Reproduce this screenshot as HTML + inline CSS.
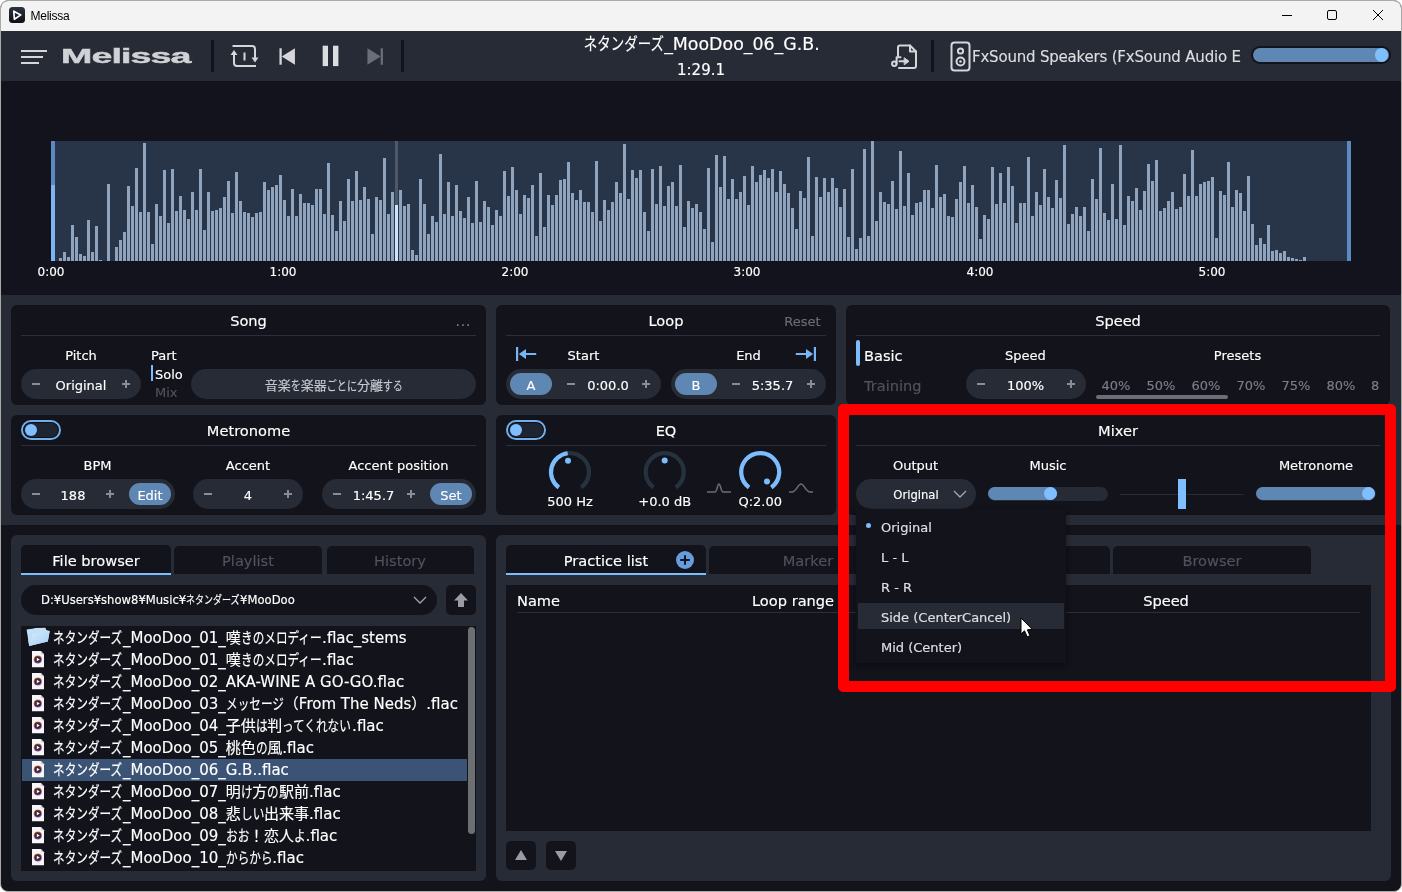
<!DOCTYPE html>
<html lang="ja"><head><meta charset="utf-8"><title>Melissa</title>
<style>
*{box-sizing:border-box;margin:0;padding:0}
html,body{width:1402px;height:892px;overflow:hidden;background:#fff}
body{position:relative;font-family:"DejaVu Sans","Liberation Sans","Noto Sans CJK JP",sans-serif;color:#fff;font-size:13px;-webkit-text-stroke:0.150px currentColor}
.a{position:absolute}
.win{will-change:transform;position:absolute;left:0;top:0;width:1402px;height:892px;border-radius:8px;overflow:hidden;background:#12131b;border:1px solid #a9a9a6}
.tb{left:0;top:0;width:1400px;height:30px;background:#f3f3f3;color:#000}
.hd{left:0;top:30px;width:1400px;height:50px;background:#272b36}
.wv{left:0;top:80px;width:1400px;height:214px;background:#12131c}
.mid{left:0;top:294px;width:1400px;height:230px;background:#272b36}
.pn{position:absolute;background:#12131b;border-radius:6px}
.pn2{position:absolute;background:#272b36;border-radius:6px}
.t{position:absolute;white-space:nowrap;transform:translate(-50%,-50%);line-height:1}
.tl{position:absolute;white-space:nowrap;transform:translate(0,-50%);line-height:1}
.ttl{font-size:14.600px}
.lb{font-size:13px}
.dv{position:absolute;height:1px;background:#2b2f3a}
.st{position:absolute;height:30px;border-radius:15px;background:#272b36}
.pm{color:#7c7f89;font-size:15px}
.btn{position:absolute;height:22px;border-radius:11px;background:#5f87b4}
.tg{position:absolute;width:40px;height:20px;border-radius:10px;border:2px solid #71aeec;background:#0e0f16}
.tg b{position:absolute;left:1px;top:1px;width:34px;height:14px;border-radius:7px;background:#1f2431}
.tg i{position:absolute;left:2px;top:2px;width:12px;height:12px;border-radius:6px;background:#80bfff}
.dim{color:#50535e}
.gr{color:#7c7f89}
.k{display:inline-block;transform-origin:0 50%;white-space:nowrap}
.row{position:absolute;left:22px;width:445px;height:22px}
.row .tl{left:31px;top:11px;font-size:15px}
svg{position:absolute;overflow:visible}
.kw{display:inline-block;vertical-align:baseline;white-space:nowrap;overflow:visible}
</style></head>
<body>
<div class="win">

<div class="a tb">
 <svg style="left:8px;top:6px" width="17" height="17" viewBox="0 0 17 17"><defs><linearGradient id="ig" x1="0" y1="0" x2="0" y2="1"><stop offset="0" stop-color="#2c3442"/><stop offset="1" stop-color="#0d0f16"/></linearGradient></defs><rect x="0" y="0" width="16" height="16" rx="3.500" fill="url(#ig)"/><path d="M4.800 4.200 L11.800 7.900 L5.400 12.200 Z" fill="none" stroke="#fff" stroke-width="1.700" stroke-linejoin="round"/></svg>
 <div class="tl" style="left:29.500px;top:14.500px;font-size:12px;letter-spacing:-0.250px;-webkit-text-stroke:0;font-family:'Liberation Sans',sans-serif;color:#000">Melissa</div>
 <svg style="left:1281px;top:9px" width="12" height="12"><path d="M0 5.500H10" stroke="#000" stroke-width="1"/></svg>
 <svg style="left:1326px;top:9px" width="12" height="12"><rect x="0.500" y="0.500" width="9" height="9" rx="1.500" fill="none" stroke="#000" stroke-width="1"/></svg>
 <svg style="left:1372px;top:9px" width="12" height="12"><path d="M0 0L10 10M10 0L0 10" stroke="#000" stroke-width="1"/></svg>
</div>


<div class="a hd">
 <div class="a" style="left:20px;top:19px;width:26px;height:2px;background:#d4d6da"></div>
 <div class="a" style="left:20px;top:25px;width:22px;height:2px;background:#d4d6da"></div>
 <div class="a" style="left:20px;top:31px;width:18px;height:2px;background:#d4d6da"></div>
 <div class="tl" id="logo" style="left:59.500px;top:24.400px;font-size:21px;font-weight:bold;font-family:'Liberation Sans',sans-serif;color:#d0d2d6;transform-origin:0 50%;transform:translate(0,-50%) scaleX(1.790);letter-spacing:-0.500px;-webkit-text-stroke:0.450px #d0d2d6">Melissa</div>
 <div class="a" style="left:210px;top:9px;width:3px;height:32px;background:#12131b"></div>
 <div class="a" style="left:400px;top:9px;width:3px;height:32px;background:#12131b"></div>
 <div class="a" style="left:930px;top:9px;width:3px;height:32px;background:#12131b"></div>
 <!-- loop icon -->
 <svg style="left:228.900px;top:13px" width="30" height="24" viewBox="0 0 30 24" fill="none" stroke="#d4d6da" stroke-width="2">
  <path d="M4 10 V19 a3 3 0 0 0 3 3 H26"/><path d="M2.500 2 H22 a3 3 0 0 1 3 3 V14"/>
  <path d="M0.500 11 L4 6 L7.500 11 Z" fill="#d4d6da" stroke="none"/><path d="M21.500 13.500 L25 18.500 L28.500 13.500 Z" fill="#d4d6da" stroke="none"/>
  <path d="M14.500 8.500 V16.500"/>
 </svg>
 <!-- prev -->
 <svg style="left:278px;top:17px" width="16.400" height="17" viewBox="0 0 18 18" preserveAspectRatio="none"><rect x="0.500" y="0.300" width="2.500" height="17.400" fill="#d4d6da"/><path d="M3 9 L17.500 0.300 V17.700 Z" fill="#d4d6da"/></svg>
 <!-- pause -->
 <svg style="left:321px;top:14px" width="20" height="24" viewBox="0 0 20 24" fill="#dcdde0"><rect x="0.700" y="0.700" width="5.300" height="20.400"/><rect x="11" y="0.700" width="5.400" height="20.400"/></svg>
 <!-- next -->
 <svg style="left:365.700px;top:17px" width="16.400" height="17" viewBox="0 0 18 18" preserveAspectRatio="none"><rect x="15" y="0.300" width="2.500" height="17.400" fill="#6b6e78"/><path d="M15 9 L0.500 0.300 V17.700 Z" fill="#6b6e78"/></svg>
 <div class="t" id="title" style="left:700.500px;top:14px;font-size:17.400px"><span class="kw" style="width:80.900px"><span class="k" style="transform:scaleX(0.775)">ネタンダーズ</span></span>_MooDoo_06_G.B.</div>
 <div class="t" style="left:700px;top:39px;font-size:15px">1:29.1</div>
 <!-- file export icon -->
 <svg style="left:889px;top:11.500px" width="28" height="28" viewBox="0 0 28 28" fill="none" stroke="#d4d6da" stroke-width="2" stroke-linejoin="round" stroke-linecap="round">
  <path d="M8 13 V4.500 a2 2 0 0 1 2 -2 H20 L26 8.500 V23 a2 2 0 0 1 -2 2 H9"/><path d="M20 2.500 V8.500 H26"/>
  <circle cx="4.300" cy="20.800" r="2.200"/><path d="M6.600 20.800 V14.300 H10.500"/><path d="M9.500 18.300 H15"/><path d="M14.500 15 L19 18.300 L14.500 21.600 Z" fill="#d4d6da" stroke-width="1"/>
 </svg>
 <!-- speaker -->
 <svg style="left:949.200px;top:9.600px" width="22" height="32" viewBox="0 0 22 32" fill="none" stroke="#d4d6da" stroke-width="2">
  <rect x="1.500" y="1.500" width="18" height="28" rx="3"/><circle cx="10.500" cy="10" r="2.600"/><circle cx="10.500" cy="20.500" r="4"/><circle cx="10.500" cy="20.500" r="1.300" fill="#d4d6da" stroke="none"/>
 </svg>
 <div class="tl" id="dev" style="left:971px;top:26px;font-size:15px;letter-spacing:-0.200px;color:#dcdde0">FxSound Speakers (FxSound Audio E</div>
 <div class="a" style="left:1249.500px;top:15px;width:140px;height:18px;border-radius:9px;background:#12131b"></div>
 <div class="a" style="left:1251.500px;top:17.400px;width:136px;height:13.600px;border-radius:7px;background:#5f87b4"></div>
 <div class="a" style="left:1373.800px;top:17.400px;width:13.600px;height:13.600px;border-radius:7px;background:#80bfff"></div>
</div>


<div class="a wv">
 <div class="a" style="left:50px;top:60px;width:1300px;height:120px;background:#283548"></div>
 <svg style="left:-1px;top:-81px" width="1402" height="300" viewBox="0 0 1402 300" fill="#8fa3bd" shape-rendering="crispEdges">
  <rect x="395" y="141" width="3" height="70" fill="#4d5869"/>
  <rect x="59" y="258" width="3" height="3"/>
<rect x="63" y="252" width="3" height="9"/>
<rect x="67" y="257" width="3" height="4"/>
<rect x="71" y="225" width="3" height="36"/>
<rect x="75" y="237" width="3" height="24"/>
<rect x="79" y="254" width="3" height="7"/>
<rect x="83" y="256" width="3" height="5"/>
<rect x="87" y="220" width="3" height="41"/>
<rect x="91" y="252" width="3" height="9"/>
<rect x="95" y="226" width="3" height="35"/>
<rect x="99" y="260" width="3" height="1"/>
<rect x="107" y="184" width="3" height="77"/>
<rect x="115" y="247" width="3" height="14"/>
<rect x="119" y="240" width="3" height="21"/>
<rect x="123" y="232" width="3" height="29"/>
<rect x="127" y="186" width="3" height="75"/>
<rect x="131" y="206" width="3" height="55"/>
<rect x="135" y="168" width="3" height="93"/>
<rect x="139" y="212" width="3" height="49"/>
<rect x="143" y="143" width="3" height="118"/>
<rect x="147" y="212" width="3" height="49"/>
<rect x="151" y="244" width="3" height="17"/>
<rect x="155" y="204" width="3" height="57"/>
<rect x="159" y="216" width="3" height="45"/>
<rect x="163" y="170" width="3" height="91"/>
<rect x="167" y="223" width="3" height="38"/>
<rect x="171" y="169" width="3" height="92"/>
<rect x="175" y="211" width="3" height="50"/>
<rect x="179" y="196" width="3" height="65"/>
<rect x="183" y="210" width="3" height="51"/>
<rect x="187" y="219" width="3" height="42"/>
<rect x="191" y="192" width="3" height="69"/>
<rect x="195" y="210" width="3" height="51"/>
<rect x="199" y="169" width="3" height="92"/>
<rect x="203" y="230" width="3" height="31"/>
<rect x="207" y="192" width="3" height="69"/>
<rect x="211" y="211" width="3" height="50"/>
<rect x="215" y="210" width="3" height="51"/>
<rect x="219" y="208" width="3" height="53"/>
<rect x="223" y="197" width="3" height="64"/>
<rect x="227" y="181" width="3" height="80"/>
<rect x="231" y="213" width="3" height="48"/>
<rect x="235" y="172" width="3" height="89"/>
<rect x="239" y="201" width="3" height="60"/>
<rect x="243" y="212" width="3" height="49"/>
<rect x="247" y="213" width="3" height="48"/>
<rect x="251" y="217" width="3" height="44"/>
<rect x="255" y="213" width="3" height="48"/>
<rect x="259" y="212" width="3" height="49"/>
<rect x="263" y="182" width="3" height="79"/>
<rect x="267" y="190" width="3" height="71"/>
<rect x="271" y="187" width="3" height="74"/>
<rect x="275" y="185" width="3" height="76"/>
<rect x="279" y="175" width="3" height="86"/>
<rect x="283" y="200" width="3" height="61"/>
<rect x="287" y="216" width="3" height="45"/>
<rect x="291" y="189" width="3" height="72"/>
<rect x="295" y="216" width="3" height="45"/>
<rect x="299" y="194" width="3" height="67"/>
<rect x="303" y="203" width="3" height="58"/>
<rect x="307" y="203" width="3" height="58"/>
<rect x="311" y="205" width="3" height="56"/>
<rect x="315" y="189" width="3" height="72"/>
<rect x="319" y="189" width="3" height="72"/>
<rect x="323" y="214" width="3" height="47"/>
<rect x="327" y="163" width="3" height="98"/>
<rect x="331" y="215" width="3" height="46"/>
<rect x="335" y="231" width="3" height="30"/>
<rect x="339" y="201" width="3" height="60"/>
<rect x="343" y="221" width="3" height="40"/>
<rect x="347" y="179" width="3" height="82"/>
<rect x="351" y="201" width="3" height="60"/>
<rect x="355" y="171" width="3" height="90"/>
<rect x="359" y="200" width="3" height="61"/>
<rect x="363" y="187" width="3" height="74"/>
<rect x="367" y="199" width="3" height="62"/>
<rect x="371" y="234" width="3" height="27"/>
<rect x="375" y="197" width="3" height="64"/>
<rect x="379" y="200" width="3" height="61"/>
<rect x="383" y="158" width="3" height="103"/>
<rect x="387" y="214" width="3" height="47"/>
<rect x="391" y="192" width="3" height="69"/>
<rect x="395" y="205" width="3" height="56" fill="#cde4ff"/>
<rect x="399" y="190" width="3" height="71"/>
<rect x="403" y="206" width="3" height="55"/>
<rect x="407" y="204" width="3" height="57"/>
<rect x="411" y="250" width="3" height="11"/>
<rect x="415" y="255" width="3" height="6"/>
<rect x="419" y="179" width="3" height="82"/>
<rect x="423" y="204" width="3" height="57"/>
<rect x="427" y="234" width="3" height="27"/>
<rect x="431" y="216" width="3" height="45"/>
<rect x="435" y="222" width="3" height="39"/>
<rect x="439" y="154" width="3" height="107"/>
<rect x="443" y="214" width="3" height="47"/>
<rect x="447" y="182" width="3" height="79"/>
<rect x="451" y="216" width="3" height="45"/>
<rect x="455" y="185" width="3" height="76"/>
<rect x="459" y="211" width="3" height="50"/>
<rect x="463" y="218" width="3" height="43"/>
<rect x="467" y="197" width="3" height="64"/>
<rect x="471" y="223" width="3" height="38"/>
<rect x="475" y="181" width="3" height="80"/>
<rect x="479" y="222" width="3" height="39"/>
<rect x="483" y="201" width="3" height="60"/>
<rect x="487" y="207" width="3" height="54"/>
<rect x="491" y="225" width="3" height="36"/>
<rect x="495" y="210" width="3" height="51"/>
<rect x="499" y="216" width="3" height="45"/>
<rect x="503" y="171" width="3" height="90"/>
<rect x="507" y="196" width="3" height="65"/>
<rect x="511" y="167" width="3" height="94"/>
<rect x="515" y="190" width="3" height="71"/>
<rect x="519" y="214" width="3" height="47"/>
<rect x="523" y="195" width="3" height="66"/>
<rect x="527" y="198" width="3" height="63"/>
<rect x="531" y="185" width="3" height="76"/>
<rect x="535" y="236" width="3" height="25"/>
<rect x="539" y="173" width="3" height="88"/>
<rect x="543" y="227" width="3" height="34"/>
<rect x="547" y="195" width="3" height="66"/>
<rect x="551" y="205" width="3" height="56"/>
<rect x="555" y="195" width="3" height="66"/>
<rect x="559" y="180" width="3" height="81"/>
<rect x="563" y="179" width="3" height="82"/>
<rect x="567" y="162" width="3" height="99"/>
<rect x="571" y="193" width="3" height="68"/>
<rect x="575" y="200" width="3" height="61"/>
<rect x="579" y="190" width="3" height="71"/>
<rect x="583" y="202" width="3" height="59"/>
<rect x="587" y="202" width="3" height="59"/>
<rect x="591" y="212" width="3" height="49"/>
<rect x="595" y="161" width="3" height="100"/>
<rect x="599" y="221" width="3" height="40"/>
<rect x="603" y="200" width="3" height="61"/>
<rect x="607" y="210" width="3" height="51"/>
<rect x="611" y="202" width="3" height="59"/>
<rect x="615" y="182" width="3" height="79"/>
<rect x="619" y="193" width="3" height="68"/>
<rect x="623" y="144" width="3" height="117"/>
<rect x="627" y="199" width="3" height="62"/>
<rect x="631" y="170" width="3" height="91"/>
<rect x="635" y="178" width="3" height="83"/>
<rect x="639" y="170" width="3" height="91"/>
<rect x="643" y="212" width="3" height="49"/>
<rect x="647" y="231" width="3" height="30"/>
<rect x="651" y="169" width="3" height="92"/>
<rect x="655" y="204" width="3" height="57"/>
<rect x="659" y="166" width="3" height="95"/>
<rect x="663" y="206" width="3" height="55"/>
<rect x="667" y="186" width="3" height="75"/>
<rect x="671" y="182" width="3" height="79"/>
<rect x="675" y="206" width="3" height="55"/>
<rect x="679" y="165" width="3" height="96"/>
<rect x="683" y="227" width="3" height="34"/>
<rect x="687" y="201" width="3" height="60"/>
<rect x="691" y="208" width="3" height="53"/>
<rect x="695" y="204" width="3" height="57"/>
<rect x="699" y="212" width="3" height="49"/>
<rect x="703" y="229" width="3" height="32"/>
<rect x="707" y="168" width="3" height="93"/>
<rect x="711" y="242" width="3" height="19"/>
<rect x="715" y="155" width="3" height="106"/>
<rect x="719" y="187" width="3" height="74"/>
<rect x="723" y="156" width="3" height="105"/>
<rect x="727" y="199" width="3" height="62"/>
<rect x="731" y="179" width="3" height="82"/>
<rect x="735" y="199" width="3" height="62"/>
<rect x="739" y="192" width="3" height="69"/>
<rect x="743" y="176" width="3" height="85"/>
<rect x="747" y="205" width="3" height="56"/>
<rect x="751" y="166" width="3" height="95"/>
<rect x="755" y="182" width="3" height="79"/>
<rect x="759" y="175" width="3" height="86"/>
<rect x="763" y="170" width="3" height="91"/>
<rect x="767" y="178" width="3" height="83"/>
<rect x="771" y="169" width="3" height="92"/>
<rect x="775" y="192" width="3" height="69"/>
<rect x="779" y="171" width="3" height="90"/>
<rect x="783" y="184" width="3" height="77"/>
<rect x="787" y="193" width="3" height="68"/>
<rect x="791" y="208" width="3" height="53"/>
<rect x="795" y="229" width="3" height="32"/>
<rect x="799" y="191" width="3" height="70"/>
<rect x="803" y="198" width="3" height="63"/>
<rect x="807" y="157" width="3" height="104"/>
<rect x="811" y="236" width="3" height="25"/>
<rect x="815" y="177" width="3" height="84"/>
<rect x="819" y="197" width="3" height="64"/>
<rect x="823" y="178" width="3" height="83"/>
<rect x="827" y="192" width="3" height="69"/>
<rect x="831" y="178" width="3" height="83"/>
<rect x="835" y="188" width="3" height="73"/>
<rect x="839" y="207" width="3" height="54"/>
<rect x="843" y="189" width="3" height="72"/>
<rect x="847" y="237" width="3" height="24"/>
<rect x="851" y="169" width="3" height="92"/>
<rect x="855" y="249" width="3" height="12"/>
<rect x="859" y="238" width="3" height="23"/>
<rect x="863" y="149" width="3" height="112"/>
<rect x="867" y="236" width="3" height="25"/>
<rect x="871" y="141" width="3" height="120"/>
<rect x="875" y="221" width="3" height="40"/>
<rect x="879" y="192" width="3" height="69"/>
<rect x="883" y="202" width="3" height="59"/>
<rect x="887" y="204" width="3" height="57"/>
<rect x="891" y="181" width="3" height="80"/>
<rect x="895" y="209" width="3" height="52"/>
<rect x="899" y="151" width="3" height="110"/>
<rect x="903" y="206" width="3" height="55"/>
<rect x="907" y="173" width="3" height="88"/>
<rect x="911" y="215" width="3" height="46"/>
<rect x="915" y="203" width="3" height="58"/>
<rect x="919" y="202" width="3" height="59"/>
<rect x="923" y="190" width="3" height="71"/>
<rect x="927" y="190" width="3" height="71"/>
<rect x="931" y="208" width="3" height="53"/>
<rect x="935" y="165" width="3" height="96"/>
<rect x="939" y="197" width="3" height="64"/>
<rect x="943" y="194" width="3" height="67"/>
<rect x="947" y="216" width="3" height="45"/>
<rect x="951" y="217" width="3" height="44"/>
<rect x="955" y="199" width="3" height="62"/>
<rect x="959" y="182" width="3" height="79"/>
<rect x="963" y="166" width="3" height="95"/>
<rect x="967" y="203" width="3" height="58"/>
<rect x="971" y="185" width="3" height="76"/>
<rect x="975" y="207" width="3" height="54"/>
<rect x="979" y="239" width="3" height="22"/>
<rect x="983" y="215" width="3" height="46"/>
<rect x="987" y="219" width="3" height="42"/>
<rect x="991" y="167" width="3" height="94"/>
<rect x="995" y="204" width="3" height="57"/>
<rect x="999" y="173" width="3" height="88"/>
<rect x="1003" y="203" width="3" height="58"/>
<rect x="1007" y="167" width="3" height="94"/>
<rect x="1011" y="186" width="3" height="75"/>
<rect x="1015" y="223" width="3" height="38"/>
<rect x="1019" y="203" width="3" height="58"/>
<rect x="1023" y="203" width="3" height="58"/>
<rect x="1027" y="157" width="3" height="104"/>
<rect x="1031" y="216" width="3" height="45"/>
<rect x="1035" y="192" width="3" height="69"/>
<rect x="1039" y="205" width="3" height="56"/>
<rect x="1043" y="169" width="3" height="92"/>
<rect x="1047" y="197" width="3" height="64"/>
<rect x="1051" y="208" width="3" height="53"/>
<rect x="1055" y="180" width="3" height="81"/>
<rect x="1059" y="198" width="3" height="63"/>
<rect x="1063" y="145" width="3" height="116"/>
<rect x="1067" y="224" width="3" height="37"/>
<rect x="1071" y="214" width="3" height="47"/>
<rect x="1075" y="207" width="3" height="54"/>
<rect x="1079" y="216" width="3" height="45"/>
<rect x="1083" y="207" width="3" height="54"/>
<rect x="1087" y="231" width="3" height="30"/>
<rect x="1091" y="179" width="3" height="82"/>
<rect x="1095" y="199" width="3" height="62"/>
<rect x="1099" y="148" width="3" height="113"/>
<rect x="1103" y="213" width="3" height="48"/>
<rect x="1107" y="220" width="3" height="41"/>
<rect x="1111" y="184" width="3" height="77"/>
<rect x="1115" y="219" width="3" height="42"/>
<rect x="1119" y="145" width="3" height="116"/>
<rect x="1123" y="225" width="3" height="36"/>
<rect x="1127" y="196" width="3" height="65"/>
<rect x="1131" y="201" width="3" height="60"/>
<rect x="1135" y="188" width="3" height="73"/>
<rect x="1139" y="210" width="3" height="51"/>
<rect x="1143" y="191" width="3" height="70"/>
<rect x="1147" y="164" width="3" height="97"/>
<rect x="1151" y="181" width="3" height="80"/>
<rect x="1155" y="160" width="3" height="101"/>
<rect x="1159" y="211" width="3" height="50"/>
<rect x="1163" y="208" width="3" height="53"/>
<rect x="1167" y="201" width="3" height="60"/>
<rect x="1171" y="192" width="3" height="69"/>
<rect x="1175" y="209" width="3" height="52"/>
<rect x="1179" y="207" width="3" height="54"/>
<rect x="1183" y="174" width="3" height="87"/>
<rect x="1187" y="196" width="3" height="65"/>
<rect x="1191" y="150" width="3" height="111"/>
<rect x="1195" y="196" width="3" height="65"/>
<rect x="1199" y="184" width="3" height="77"/>
<rect x="1203" y="182" width="3" height="79"/>
<rect x="1207" y="181" width="3" height="80"/>
<rect x="1211" y="177" width="3" height="84"/>
<rect x="1215" y="238" width="3" height="23"/>
<rect x="1219" y="191" width="3" height="70"/>
<rect x="1223" y="195" width="3" height="66"/>
<rect x="1227" y="162" width="3" height="99"/>
<rect x="1231" y="207" width="3" height="54"/>
<rect x="1235" y="190" width="3" height="71"/>
<rect x="1239" y="193" width="3" height="68"/>
<rect x="1243" y="211" width="3" height="50"/>
<rect x="1247" y="176" width="3" height="85"/>
<rect x="1251" y="224" width="3" height="37"/>
<rect x="1255" y="245" width="3" height="16"/>
<rect x="1259" y="238" width="3" height="23"/>
<rect x="1263" y="244" width="3" height="17"/>
<rect x="1267" y="225" width="3" height="36"/>
<rect x="1271" y="251" width="3" height="10"/>
<rect x="1275" y="250" width="3" height="11"/>
<rect x="1279" y="253" width="3" height="8"/>
<rect x="1283" y="251" width="3" height="10"/>
<rect x="1287" y="257" width="3" height="4"/>
<rect x="1291" y="258" width="3" height="3"/>
<rect x="1295" y="259" width="3" height="2"/>
<rect x="1299" y="260" width="3" height="1"/>
<rect x="1303" y="257" width="3" height="4"/>
  <rect x="51" y="141" width="4" height="44" fill="#5a8bc0"/>
  <rect x="51" y="185" width="4" height="76" fill="#7bb5f2"/>
  <rect x="1347" y="141" width="4" height="120" fill="#5a8bc0"/>
 </svg>
 <div class="t" style="left:50px;top:191px;font-size:12px">0:00</div><div class="t" style="left:282px;top:191px;font-size:12px">1:00</div><div class="t" style="left:514px;top:191px;font-size:12px">2:00</div><div class="t" style="left:746px;top:191px;font-size:12px">3:00</div><div class="t" style="left:979px;top:191px;font-size:12px">4:00</div><div class="t" style="left:1211px;top:191px;font-size:12px">5:00</div>
</div>

<div class="a" style="left:-1px;top:-1px;width:1402px;height:892px">
<div class="a" style="left:1px;top:295px;width:1400px;height:230px;background:#272b36"></div>
<div class="pn" style="left:11px;top:305px;width:475px;height:100px"></div>
<div class="t ttl" style="left:248.5px;top:320.5px;">Song</div>
<div class="t lb" style="left:463.5px;top:321px;color:#7c7f89;letter-spacing:0.800px;font-size:14px">...</div>
<div class="dv" style="left:21px;top:335px;width:455px"></div>
<div class="t lb" style="left:81px;top:354.5px;">Pitch</div>
<div class="st" style="left:21px;top:369px;width:120px"></div><div class="a" style="left:32px;top:383px;width:8px;height:2px;background:#8b8d96"></div><div class="t lb" style="left:81px;top:385px;">Original</div><div class="a" style="left:122px;top:383px;width:8px;height:2px;background:#8b8d96"></div><div class="a" style="left:125px;top:380px;width:2px;height:8px;background:#8b8d96"></div>
<div class="tl lb" style="left:151px;top:354.5px;">Part</div>
<div class="a" style="left:151px;top:365px;width:2px;height:16px;background:#7dbcfd"></div>
<div class="tl lb" style="left:155px;top:374px;">Solo</div>
<div class="tl lb dim" style="left:155px;top:391.5px;">Mix</div>
<div class="st" style="left:191px;top:369px;width:285px"></div>
<div class="t lb" style="left:334px;top:384.6px;font-size:13px;color:#c8cad0">音楽<span class="kw" style="width:10.08px"><span class="k" style="transform:scaleX(0.775)">を</span></span>楽器<span class="kw" style="width:30.23px"><span class="k" style="transform:scaleX(0.775)">ごとに</span></span>分離<span class="kw" style="width:20.15px"><span class="k" style="transform:scaleX(0.775)">する</span></span></div>
<div class="pn" style="left:11px;top:415px;width:475px;height:100px"></div>
<div class="tg" style="left:21px;top:420px"><b></b><i></i></div>
<div class="t ttl" style="left:248.5px;top:430.5px;">Metronome</div>
<div class="dv" style="left:21px;top:445px;width:455px"></div>
<div class="t lb" style="left:97.5px;top:464.5px;">BPM</div>
<div class="st" style="left:21px;top:479px;width:154px"></div><div class="a" style="left:32px;top:493px;width:8px;height:2px;background:#8b8d96"></div><div class="t lb" style="left:73px;top:495px;">188</div><div class="a" style="left:106px;top:493px;width:8px;height:2px;background:#8b8d96"></div><div class="a" style="left:109px;top:490px;width:2px;height:8px;background:#8b8d96"></div>
<div class="btn" style="left:129px;top:483px;width:42px"></div><div class="t lb" style="left:150px;top:494.5px;">Edit</div>
<div class="t lb" style="left:248px;top:464.5px;">Accent</div>
<div class="st" style="left:193px;top:479px;width:110px"></div><div class="a" style="left:204px;top:493px;width:8px;height:2px;background:#8b8d96"></div><div class="t lb" style="left:248px;top:495px;">4</div><div class="a" style="left:284px;top:493px;width:8px;height:2px;background:#8b8d96"></div><div class="a" style="left:287px;top:490px;width:2px;height:8px;background:#8b8d96"></div>
<div class="t lb" style="left:398.5px;top:464.5px;">Accent position</div>
<div class="st" style="left:322px;top:479px;width:154px"></div><div class="a" style="left:333px;top:493px;width:8px;height:2px;background:#8b8d96"></div><div class="t lb" style="left:373.5px;top:495px;">1:45.7</div><div class="a" style="left:407px;top:493px;width:8px;height:2px;background:#8b8d96"></div><div class="a" style="left:410px;top:490px;width:2px;height:8px;background:#8b8d96"></div>
<div class="btn" style="left:430px;top:483px;width:42px"></div><div class="t lb" style="left:451px;top:494.5px;">Set</div>
<div class="pn" style="left:496px;top:305px;width:340px;height:100px"></div>
<div class="t ttl" style="left:666px;top:320.5px;">Loop</div>
<div class="t lb" style="left:802.5px;top:320.5px;color:#6b6e78">Reset</div>
<div class="dv" style="left:506px;top:335px;width:320px"></div>
<svg style="left:515px;top:346px" width="22" height="16" viewBox="0 0 22 16" fill="#78b5f5"><rect x="1" y="1" width="2.200" height="14"/><path d="M3.800 8L11 3V13Z"/><rect x="10.500" y="7" width="10.700" height="2"/></svg>
<div class="t lb" style="left:583.5px;top:354.5px;">Start</div>
<div class="t lb" style="left:748.5px;top:354.5px;">End</div>
<svg style="left:795px;top:346px" width="22" height="16" viewBox="0 0 22 16" fill="#78b5f5"><rect x="18.800" y="1" width="2.200" height="14"/><path d="M18.200 8L11 3V13Z"/><rect x="0.800" y="7" width="10.700" height="2"/></svg>
<div class="st" style="left:506px;top:369px;width:155px"></div><div class="a" style="left:567px;top:383px;width:8px;height:2px;background:#8b8d96"></div><div class="t lb" style="left:608px;top:385px;">0:00.0</div><div class="a" style="left:642px;top:383px;width:8px;height:2px;background:#8b8d96"></div><div class="a" style="left:645px;top:380px;width:2px;height:8px;background:#8b8d96"></div>
<div class="btn" style="left:510px;top:373px;width:42px"></div><div class="t lb" style="left:531px;top:384.5px;">A</div>
<div class="st" style="left:671px;top:369px;width:155px"></div><div class="a" style="left:732px;top:383px;width:8px;height:2px;background:#8b8d96"></div><div class="t lb" style="left:772.5px;top:385px;">5:35.7</div><div class="a" style="left:807px;top:383px;width:8px;height:2px;background:#8b8d96"></div><div class="a" style="left:810px;top:380px;width:2px;height:8px;background:#8b8d96"></div>
<div class="btn" style="left:675px;top:373px;width:42px"></div><div class="t lb" style="left:696px;top:384.5px;">B</div>
<div class="pn" style="left:496px;top:415px;width:340px;height:100px"></div>
<div class="tg" style="left:506px;top:420px"><b></b><i></i></div>
<div class="t ttl" style="left:666px;top:430.5px;">EQ</div>
<div class="dv" style="left:506px;top:445px;width:320px"></div>
<svg style="left:0;top:0" width="1402" height="892" viewBox="0 0 1402 892" fill="none" stroke-width="4.200"><path d="M558.83 487.47 A19.0 19.0 0 1 1 581.17 487.47" stroke="#27323f"/><path d="M558.83 487.47 A19.0 19.0 0 0 1 567.68 453.24" stroke="#7dbcfd"/><circle cx="568.00" cy="460.77" r="3" fill="#7dbcfd" stroke="none"/></svg>
<div class="t lb" style="left:570px;top:500.5px;">500 Hz</div>
<svg style="left:0;top:0" width="1402" height="892" viewBox="0 0 1402 892" fill="none" stroke-width="4.200"><path d="M653.53 487.47 A19.0 19.0 0 1 1 675.87 487.47" stroke="#27323f"/><circle cx="664.70" cy="460.60" r="3" fill="#7dbcfd" stroke="none"/></svg>
<div class="t lb" style="left:664.7px;top:500.5px;">+0.0 dB</div>
<svg style="left:0;top:0" width="1402" height="892" viewBox="0 0 1402 892" fill="none" stroke-width="4.200"><path d="M749.03 487.47 A19.0 19.0 0 1 1 771.37 487.47" stroke="#27323f"/><path d="M749.03 487.47 A19.0 19.0 0 1 1 771.37 487.47" stroke="#7dbcfd"/><circle cx="766.96" cy="481.40" r="3" fill="#7dbcfd" stroke="none"/></svg>
<div class="t lb" style="left:760.2px;top:500.5px;">Q:2.00</div>
<svg style="left:707px;top:482px" width="24" height="12" viewBox="0 0 24 12" fill="none" stroke="#6b6e78" stroke-width="1.5"><path d="M0 10H8C10 10 10.500 2 12 2C13.500 2 14 10 16 10H24"/></svg>
<svg style="left:789px;top:482px" width="24" height="12" viewBox="0 0 24 12" fill="none" stroke="#6b6e78" stroke-width="1.5"><path d="M0 10H3C7 10 9 2 12 2C15 2 17 10 21 10H24"/></svg>
<div class="pn" style="left:846px;top:305px;width:544px;height:100px"></div>
<div class="t ttl" style="left:1118px;top:320.5px;">Speed</div>
<div class="dv" style="left:856px;top:335px;width:524px"></div>
<div class="a" style="left:856px;top:340px;width:4px;height:26px;border-radius:2px;background:#7dbcfd"></div>
<div class="tl ttl" style="left:864px;top:356px;">Basic</div>
<div class="tl ttl dim" style="left:864px;top:386px;">Training</div>
<div class="t lb" style="left:1025.5px;top:354.5px;">Speed</div>
<div class="st" style="left:966px;top:369px;width:120px"></div><div class="a" style="left:977px;top:383px;width:8px;height:2px;background:#8b8d96"></div><div class="t lb" style="left:1025.5px;top:385px;">100%</div><div class="a" style="left:1067px;top:383px;width:8px;height:2px;background:#8b8d96"></div><div class="a" style="left:1070px;top:380px;width:2px;height:8px;background:#8b8d96"></div>
<div class="t lb" style="left:1237.5px;top:354.5px;">Presets</div>
<div class="t lb" style="left:1116px;top:384.5px;color:#7c7f89">40%</div>
<div class="t lb" style="left:1161px;top:384.5px;color:#7c7f89">50%</div>
<div class="t lb" style="left:1206px;top:384.5px;color:#7c7f89">60%</div>
<div class="t lb" style="left:1251px;top:384.5px;color:#7c7f89">70%</div>
<div class="t lb" style="left:1296px;top:384.5px;color:#7c7f89">75%</div>
<div class="t lb" style="left:1341px;top:384.5px;color:#7c7f89">80%</div>
<div class="tl lb" style="left:1371px;top:384.5px;color:#7c7f89">8</div>
<div class="a" style="left:1096px;top:394.500px;width:132px;height:4px;border-radius:2px;background:#6b6e78"></div>
<div class="pn" style="left:846px;top:415px;width:544px;height:100px"></div>
<div class="t ttl" style="left:1118px;top:430.5px;">Mixer</div>
<div class="dv" style="left:856px;top:445px;width:524px"></div>
<div class="t lb" style="left:915.5px;top:464.5px;">Output</div>
<div class="t lb" style="left:1048px;top:464.5px;">Music</div>
<div class="t lb" style="left:1316px;top:464.5px;">Metronome</div>
<div class="st" style="left:856px;top:479px;width:120px"></div>
<div class="t lb" style="left:916px;top:495.8px;font-size:11.600px">Original</div>
<svg style="left:953px;top:489px" width="14" height="10" viewBox="0 0 14 10" fill="none" stroke="#a4a6ad" stroke-width="1.300"><path d="M1 2L7 8L13 2"/></svg>
<div class="a" style="left:987.5px;top:486.500px;width:120.5px;height:14px;border-radius:7px;background:#272b36"></div><div class="a" style="left:988px;top:486.800px;width:68.5px;height:13.400px;border-radius:6.500px;background:#5f87b4"></div><div class="a" style="left:1043.5px;top:486.800px;width:13.400px;height:13.400px;border-radius:6.700px;background:#80bfff"></div>
<div class="a" style="left:1120px;top:493.500px;width:124px;height:1px;background:#272b36"></div>
<div class="a" style="left:1178px;top:479px;width:8px;height:30px;background:#80bfff"></div>
<div class="a" style="left:1255.5px;top:486.500px;width:120.5px;height:14px;border-radius:7px;background:#272b36"></div><div class="a" style="left:1256px;top:486.800px;width:118.5px;height:13.400px;border-radius:6.500px;background:#5f87b4"></div><div class="a" style="left:1361.5px;top:486.800px;width:13.400px;height:13.400px;border-radius:6.700px;background:#80bfff"></div>
<div class="pn2" style="left:11px;top:535px;width:475px;height:346px"></div>
<div class="a" style="left:21px;top:545px;width:150px;height:30px;border-radius:5px 5px 0 0;background:#12131b"></div>
<div class="a" style="left:21px;top:573px;width:150px;height:2px;background:#7dbcfd"></div>
<div class="t ttl" style="left:96px;top:560.8px;">File browser</div>
<div class="a" style="left:174px;top:546px;width:147.500px;height:28px;border-radius:5px 5px 0 0;background:#12131b"></div>
<div class="t ttl dim" style="left:248px;top:560.8px;">Playlist</div>
<div class="a" style="left:326.500px;top:546px;width:147.500px;height:28px;border-radius:5px 5px 0 0;background:#12131b"></div>
<div class="t ttl dim" style="left:400px;top:560.8px;">History</div>
<div class="a" style="left:21px;top:585px;width:415.500px;height:30px;border-radius:15px;background:#12131b"></div>
<div class="tl lb" style="left:41px;top:600.8px;font-size:11.600px">D:¥Users¥show8¥Music¥<span class="kw" style="width:53.94px"><span class="k" style="transform:scaleX(0.775)">ネタンダーズ</span></span>¥MooDoo</div>
<svg style="left:412.500px;top:594.500px" width="14" height="10" viewBox="0 0 14 10" fill="none" stroke="#a4a6ad" stroke-width="1.300"><path d="M1 2L7 8L13 2"/></svg>
<div class="a" style="left:445.500px;top:585px;width:30px;height:30px;border-radius:5px;background:#12131b"></div>
<svg style="left:452.500px;top:592px" width="16" height="16" viewBox="0 0 16 16"><path d="M8 1L15 8.500H11V15H5V8.500H1Z" fill="#9a9ca3"/></svg>
<div class="a" style="left:21px;top:625.500px;width:454.500px;height:245.500px;background:#12131b"></div>
<div class="a" style="left:22px;top:758.500px;width:445px;height:22px;background:#3b5475"></div>
<div class="a" style="left:467.500px;top:626.500px;width:7.500px;height:207px;border-radius:4px;background:#6e6f73"></div>
<svg width="0" height="0" style="left:0;top:0"><defs><linearGradient id="dg" x1="0" y1="0" x2="0.300" y2="1"><stop offset="0" stop-color="#f08a2c"/><stop offset="0.550" stop-color="#d8487a"/><stop offset="1" stop-color="#9a4fd0"/></linearGradient></defs></svg>
<svg style="left:26px;top:627.0px" width="25" height="20" viewBox="0 0 25 20"><defs><linearGradient id="fg" x1="0" y1="0" x2="1" y2="1"><stop offset="0" stop-color="#d9ecfc"/><stop offset="1" stop-color="#a3cff3"/></linearGradient></defs><path d="M0.600 2.600L7.900 1.600L8.900 1L19.500 0.700L20.200 2.900L23.800 3.900L21.800 14.500L3.200 19.100Z" fill="#c4e0f8"/><path d="M5.300 7.300L23.700 4.100L21.800 14.600L3.200 19.100L2.300 13Z" fill="url(#fg)"/><path d="M5.300 7.300L4 16" stroke="#9cc6ea" stroke-width="0.400" fill="none"/></svg>
<div class="tl lb" style="left:53.2px;top:638.0px;font-size:15px"><span class="kw" style="width:69.75px"><span class="k" style="transform:scaleX(0.775)">ネタンダーズ</span></span>_MooDoo_01_嘆<span class="kw" style="width:81.38px"><span class="k" style="transform:scaleX(0.775)">きのメロディー</span></span>.flac_stems</div>
<svg style="left:32px;top:650.8px" width="13" height="17" viewBox="0 0 13 17"><path d="M0 0h8.800l3.200 3.200v13h-12z" fill="#f6f6f8"/><path d="M8.800 0v3.200h3.200z" fill="#d2d2d8"/><circle cx="5.800" cy="8.500" r="4.100" fill="url(#dg)"/><circle cx="5.800" cy="8.500" r="3.200" fill="#2e2e34"/><path d="M4.800 6.700l3 1.800-3 1.800z" fill="#fff"/></svg>
<div class="tl lb" style="left:53.2px;top:660.0px;font-size:15px"><span class="kw" style="width:69.75px"><span class="k" style="transform:scaleX(0.775)">ネタンダーズ</span></span>_MooDoo_01_嘆<span class="kw" style="width:81.38px"><span class="k" style="transform:scaleX(0.775)">きのメロディー</span></span>.flac</div>
<svg style="left:32px;top:672.8px" width="13" height="17" viewBox="0 0 13 17"><path d="M0 0h8.800l3.200 3.200v13h-12z" fill="#f6f6f8"/><path d="M8.800 0v3.200h3.200z" fill="#d2d2d8"/><circle cx="5.800" cy="8.500" r="4.100" fill="url(#dg)"/><circle cx="5.800" cy="8.500" r="3.200" fill="#2e2e34"/><path d="M4.800 6.700l3 1.800-3 1.800z" fill="#fff"/></svg>
<div class="tl lb" style="left:53.2px;top:682.0px;font-size:15px"><span class="kw" style="width:69.75px"><span class="k" style="transform:scaleX(0.775)">ネタンダーズ</span></span>_MooDoo_02_AKA-WINE A GO-GO.flac</div>
<svg style="left:32px;top:694.8px" width="13" height="17" viewBox="0 0 13 17"><path d="M0 0h8.800l3.200 3.200v13h-12z" fill="#f6f6f8"/><path d="M8.800 0v3.200h3.200z" fill="#d2d2d8"/><circle cx="5.800" cy="8.500" r="4.100" fill="url(#dg)"/><circle cx="5.800" cy="8.500" r="3.200" fill="#2e2e34"/><path d="M4.800 6.700l3 1.800-3 1.800z" fill="#fff"/></svg>
<div class="tl lb" style="left:53.2px;top:704.0px;font-size:15px"><span class="kw" style="width:69.75px"><span class="k" style="transform:scaleX(0.775)">ネタンダーズ</span></span>_MooDoo_03_<span class="kw" style="width:58.12px"><span class="k" style="transform:scaleX(0.775)">メッセージ</span></span>（From The Neds）.flac</div>
<svg style="left:32px;top:716.8px" width="13" height="17" viewBox="0 0 13 17"><path d="M0 0h8.800l3.200 3.200v13h-12z" fill="#f6f6f8"/><path d="M8.800 0v3.200h3.200z" fill="#d2d2d8"/><circle cx="5.800" cy="8.500" r="4.100" fill="url(#dg)"/><circle cx="5.800" cy="8.500" r="3.200" fill="#2e2e34"/><path d="M4.800 6.700l3 1.800-3 1.800z" fill="#fff"/></svg>
<div class="tl lb" style="left:53.2px;top:726.0px;font-size:15px"><span class="kw" style="width:69.75px"><span class="k" style="transform:scaleX(0.775)">ネタンダーズ</span></span>_MooDoo_04_子供<span class="kw" style="width:11.62px"><span class="k" style="transform:scaleX(0.775)">は</span></span>判<span class="kw" style="width:69.75px"><span class="k" style="transform:scaleX(0.775)">ってくれない</span></span>.flac</div>
<svg style="left:32px;top:738.8px" width="13" height="17" viewBox="0 0 13 17"><path d="M0 0h8.800l3.200 3.200v13h-12z" fill="#f6f6f8"/><path d="M8.800 0v3.200h3.200z" fill="#d2d2d8"/><circle cx="5.800" cy="8.500" r="4.100" fill="url(#dg)"/><circle cx="5.800" cy="8.500" r="3.200" fill="#2e2e34"/><path d="M4.800 6.700l3 1.800-3 1.800z" fill="#fff"/></svg>
<div class="tl lb" style="left:53.2px;top:748.0px;font-size:15px"><span class="kw" style="width:69.75px"><span class="k" style="transform:scaleX(0.775)">ネタンダーズ</span></span>_MooDoo_05_桃色<span class="kw" style="width:11.62px"><span class="k" style="transform:scaleX(0.775)">の</span></span>風.flac</div>
<svg style="left:32px;top:760.8px" width="13" height="17" viewBox="0 0 13 17"><path d="M0 0h8.800l3.200 3.200v13h-12z" fill="#f6f6f8"/><path d="M8.800 0v3.200h3.200z" fill="#d2d2d8"/><circle cx="5.800" cy="8.500" r="4.100" fill="url(#dg)"/><circle cx="5.800" cy="8.500" r="3.200" fill="#2e2e34"/><path d="M4.800 6.700l3 1.800-3 1.800z" fill="#fff"/></svg>
<div class="tl lb" style="left:53.2px;top:770.0px;font-size:15px"><span class="kw" style="width:69.75px"><span class="k" style="transform:scaleX(0.775)">ネタンダーズ</span></span>_MooDoo_06_G.B..flac</div>
<svg style="left:32px;top:782.8px" width="13" height="17" viewBox="0 0 13 17"><path d="M0 0h8.800l3.200 3.200v13h-12z" fill="#f6f6f8"/><path d="M8.800 0v3.200h3.200z" fill="#d2d2d8"/><circle cx="5.800" cy="8.500" r="4.100" fill="url(#dg)"/><circle cx="5.800" cy="8.500" r="3.200" fill="#2e2e34"/><path d="M4.800 6.700l3 1.800-3 1.800z" fill="#fff"/></svg>
<div class="tl lb" style="left:53.2px;top:792.0px;font-size:15px"><span class="kw" style="width:69.75px"><span class="k" style="transform:scaleX(0.775)">ネタンダーズ</span></span>_MooDoo_07_明<span class="kw" style="width:11.62px"><span class="k" style="transform:scaleX(0.775)">け</span></span>方<span class="kw" style="width:11.62px"><span class="k" style="transform:scaleX(0.775)">の</span></span>駅前.flac</div>
<svg style="left:32px;top:804.8px" width="13" height="17" viewBox="0 0 13 17"><path d="M0 0h8.800l3.200 3.200v13h-12z" fill="#f6f6f8"/><path d="M8.800 0v3.200h3.200z" fill="#d2d2d8"/><circle cx="5.800" cy="8.500" r="4.100" fill="url(#dg)"/><circle cx="5.800" cy="8.500" r="3.200" fill="#2e2e34"/><path d="M4.800 6.700l3 1.800-3 1.800z" fill="#fff"/></svg>
<div class="tl lb" style="left:53.2px;top:814.0px;font-size:15px"><span class="kw" style="width:69.75px"><span class="k" style="transform:scaleX(0.775)">ネタンダーズ</span></span>_MooDoo_08_悲<span class="kw" style="width:23.25px"><span class="k" style="transform:scaleX(0.775)">しい</span></span>出来事.flac</div>
<svg style="left:32px;top:826.8px" width="13" height="17" viewBox="0 0 13 17"><path d="M0 0h8.800l3.200 3.200v13h-12z" fill="#f6f6f8"/><path d="M8.800 0v3.200h3.200z" fill="#d2d2d8"/><circle cx="5.800" cy="8.500" r="4.100" fill="url(#dg)"/><circle cx="5.800" cy="8.500" r="3.200" fill="#2e2e34"/><path d="M4.800 6.700l3 1.800-3 1.800z" fill="#fff"/></svg>
<div class="tl lb" style="left:53.2px;top:836.0px;font-size:15px"><span class="kw" style="width:69.75px"><span class="k" style="transform:scaleX(0.775)">ネタンダーズ</span></span>_MooDoo_09_<span class="kw" style="width:23.25px"><span class="k" style="transform:scaleX(0.775)">おお</span></span>！恋人<span class="kw" style="width:11.62px"><span class="k" style="transform:scaleX(0.775)">よ</span></span>.flac</div>
<svg style="left:32px;top:848.8px" width="13" height="17" viewBox="0 0 13 17"><path d="M0 0h8.800l3.200 3.200v13h-12z" fill="#f6f6f8"/><path d="M8.800 0v3.200h3.200z" fill="#d2d2d8"/><circle cx="5.800" cy="8.500" r="4.100" fill="url(#dg)"/><circle cx="5.800" cy="8.500" r="3.200" fill="#2e2e34"/><path d="M4.800 6.700l3 1.800-3 1.800z" fill="#fff"/></svg>
<div class="tl lb" style="left:53.2px;top:858.0px;font-size:15px"><span class="kw" style="width:69.75px"><span class="k" style="transform:scaleX(0.775)">ネタンダーズ</span></span>_MooDoo_10_<span class="kw" style="width:46.50px"><span class="k" style="transform:scaleX(0.775)">からから</span></span>.flac</div>
<div class="pn2" style="left:496px;top:535px;width:895px;height:346px"></div>
<div class="a" style="left:506px;top:545px;width:200px;height:30px;border-radius:5px 5px 0 0;background:#12131b"></div>
<div class="a" style="left:506px;top:573px;width:200px;height:2px;background:#7dbcfd"></div>
<div class="t ttl" style="left:606px;top:560.8px;">Practice list</div>
<svg style="left:675.500px;top:550.500px" width="18" height="18" viewBox="0 0 18 18"><circle cx="9" cy="9" r="9" fill="#669ddd"/><path d="M9 4.200V13.800M4.200 9H13.800" stroke="#12131b" stroke-width="2"/></svg>
<div class="a" style="left:709px;top:546px;width:198px;height:28px;border-radius:5px 5px 0 0;background:#12131b"></div>
<div class="t ttl dim" style="left:808px;top:560.8px;">Marker</div>
<div class="a" style="left:911.5px;top:546px;width:198px;height:28px;border-radius:5px 5px 0 0;background:#12131b"></div>
<div class="t ttl dim" style="left:1010.5px;top:560.8px;">Memo</div>
<div class="a" style="left:1113px;top:546px;width:198px;height:28px;border-radius:5px 5px 0 0;background:#12131b"></div>
<div class="t ttl dim" style="left:1212px;top:560.8px;">Browser</div>
<div class="a" style="left:506px;top:585px;width:865px;height:246px;background:#12131b"></div>
<div class="tl ttl" style="left:517px;top:601px;">Name</div>
<div class="tl ttl" style="left:752px;top:601px;">Loop range</div>
<div class="t ttl" style="left:1166px;top:601px;">Speed</div>
<div class="dv" style="left:517px;top:612px;width:843px"></div>
<div class="a" style="left:506px;top:841px;width:29.500px;height:29px;border-radius:5px;background:#12131b"></div>
<svg style="left:512px;top:846.8px" width="18" height="17" viewBox="0 0 18 17"><path d="M3 13L9 3L15 13Z" fill="#9a9ca3"/></svg>
<div class="a" style="left:546px;top:841px;width:29.500px;height:29px;border-radius:5px;background:#12131b"></div>
<svg style="left:552px;top:846.8px" width="18" height="17" viewBox="0 0 18 17"><path d="M3 4L9 14L15 4Z" fill="#9a9ca3"/></svg>
<div class="a" style="left:856.300px;top:509px;width:209.700px;height:153.500px;background:#12131b;box-shadow:0 2px 6px rgba(0,0,0,.45)"></div>
<div class="a" style="left:858px;top:603px;width:206px;height:25.800px;background:#272b36"></div>
<div class="a" style="left:865.500px;top:522.500px;width:5px;height:5px;border-radius:3px;background:#7dbcfd"></div>
<div class="tl lb" style="left:881px;top:526.5px;color:#dfe0e4">Original</div>
<div class="tl lb" style="left:881px;top:556.5px;color:#dfe0e4">L - L</div>
<div class="tl lb" style="left:881px;top:586.5px;color:#dfe0e4">R - R</div>
<div class="tl lb" style="left:881px;top:616.5px;color:#dfe0e4">Side (CenterCancel)</div>
<div class="tl lb" style="left:881px;top:646.5px;color:#dfe0e4">Mid (Center)</div>
<div class="a" style="left:838px;top:404px;width:558px;height:288px;border:11px solid #fe0000;border-radius:5px"></div>
<svg style="left:1020.400px;top:617.400px" width="14" height="21" viewBox="0 0 14 21"><path d="M1 1V17L4.500 13.800L7.200 19.800L9.900 18.700L7.400 12.800L12.200 12.300Z" fill="#fff" stroke="#000" stroke-width="1" stroke-linejoin="round"/></svg>
</div>
</div>
</body></html>
